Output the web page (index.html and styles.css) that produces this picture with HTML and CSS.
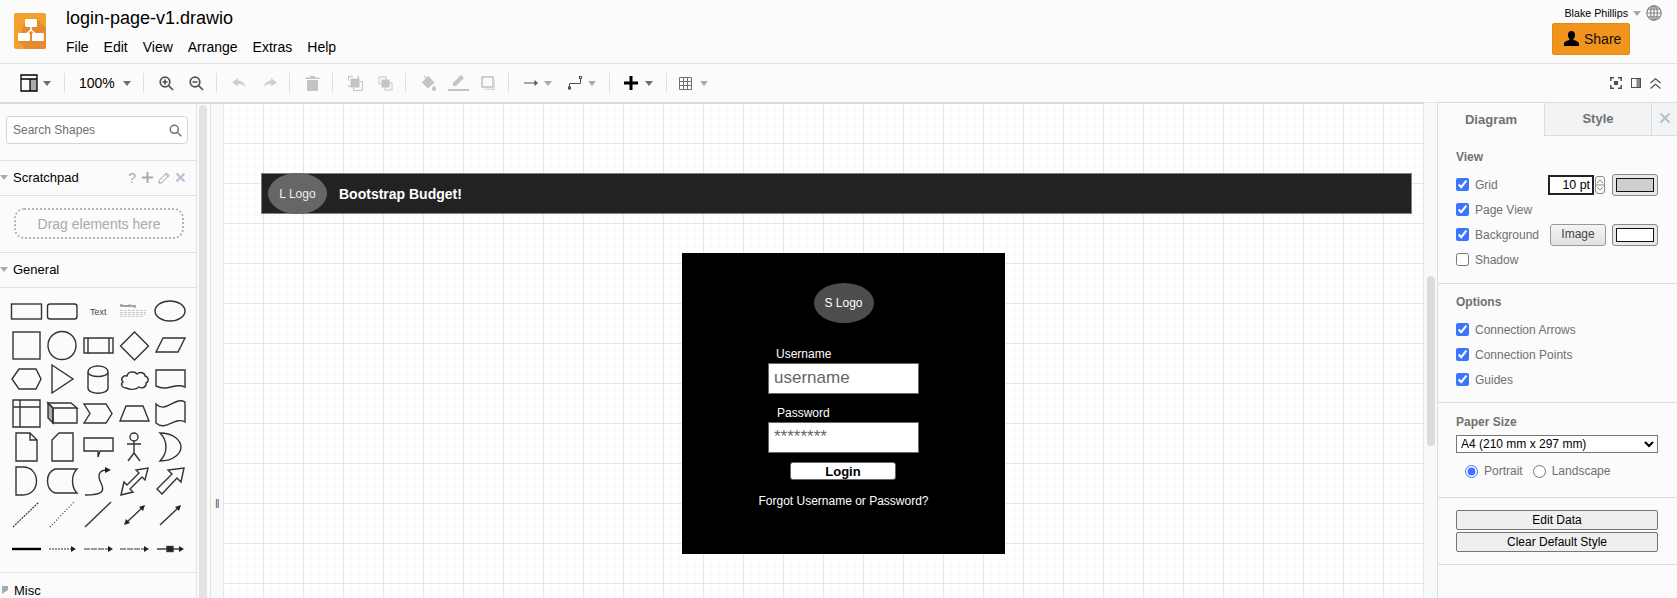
FILE: index.html
```html
<!DOCTYPE html>
<html lang="en">
<head>
  <meta charset="UTF-8">
  <title>login-page-v1.drawio</title>
  <link rel="stylesheet" href="styles.css">
</head>
<body>
  <header class="header">
    <svg class="logo" width="32" height="36" viewBox="0 0 32 36">
      <rect width="32" height="36" rx="2" fill="#f2a12e"/>
      <path d="M12 6h11l9 9v19a2 2 0 0 1-2 2H12L4 28z" fill="#e58a30"/>
      <path d="M17 13v4M17 17l-6 5M17 17l6 5" stroke="#fff" stroke-width="1.6" fill="none"/>
      <rect x="11" y="6" width="12" height="8" rx="1" fill="#fff"/>
      <rect x="4" y="20" width="12" height="8" rx="1" fill="#fff"/>
      <rect x="18" y="20" width="12" height="8" rx="1" fill="#fff"/>
    </svg>
    <div class="title-col">
      <div class="file-name">login-page-v1.drawio</div>
      <nav class="menu"><span>File</span><span>Edit</span><span>View</span><span>Arrange</span><span>Extras</span><span>Help</span></nav>
    </div>
    <div class="user-col">
      <div class="user-row">
        <span>Blake Phillips</span>
        <i class="caret"></i>
        <svg width="16" height="16" viewBox="0 0 16 16" fill="none" stroke="#888" stroke-width="1.2">
          <circle cx="8" cy="8" r="7.2"/><ellipse cx="8" cy="8" rx="3.4" ry="7.2"/>
          <path d="M8 .8v14.4M.8 8h14.4M2 4.2h12M2 11.8h12"/>
        </svg>
      </div>
      <button class="share-btn">
        <svg width="15" height="15" viewBox="0 0 15 15"><path d="M7.5 0c2.2 0 3.5 1.7 3.5 3.9 0 1.6-.6 3-1.5 3.9v1.3c1.9.6 5.5 1.6 5.5 3.4V15H0v-2.500c0-1.800 3.600-2.800 5.500-3.400V7.800C4.600 6.900 4 5.500 4 3.900 4 1.700 5.300 0 7.500 0z"/></svg>
        Share
      </button>
    </div>
  </header>

  <div class="toolbar">
    <div class="tb-group first">
      <svg width="18" height="18" viewBox="0 0 18 18"><rect x="10" y="5" width="7" height="12" fill="#aaa"/><path d="M1 1h16v16H1zM1 5h16M10 5v12" fill="none" stroke="#000" stroke-width="1.300"/></svg>
      <i class="caret"></i>
    </div>
    <div class="tb-group zoom-label"><span>100%</span><i class="caret"></i></div>
    <div class="tb-group icons">
      <svg width="15" height="15" viewBox="0 0 15 15" fill="none" stroke="#505050" stroke-width="1.700"><circle cx="6" cy="6" r="4.800"/><path d="M9.500 9.500L14 14M3.500 6h5M6 3.500v5"/></svg>
      <svg width="15" height="15" viewBox="0 0 15 15" fill="none" stroke="#505050" stroke-width="1.700"><circle cx="6" cy="6" r="4.800"/><path d="M9.500 9.500L14 14M3.500 6h5"/></svg>
    </div>
    <div class="tb-group icons">
      <svg width="15" height="10" viewBox="0 0 15 10" fill="#cfcfcf"><path d="M6 2.500V0L0 4.500 6 8.500V6c3.500 0 6 .8 7.500 3.500C13 6 10.500 2.800 6 2.500z"/></svg>
      <svg width="15" height="10" viewBox="0 0 15 10" fill="#cfcfcf"><path d="M9 2.500V0l6 4.500L9 8.500V6C5.500 6 3 6.800 1.500 9.500 2 6 4.500 2.800 9 2.500z"/></svg>
    </div>
    <div class="tb-group icons">
      <svg width="15" height="15" viewBox="0 0 15 15" fill="#c4c4c4"><path d="M.5 1.500H5V0h5v1.500h4.500V3H.5zM2 4h11v11H2z"/></svg>
    </div>
    <div class="tb-group icons">
      <svg width="15" height="15" viewBox="0 0 15 15" fill="none" stroke="#c4c4c4"><path d="M5 .5H.5V5M.5 9v1.500H3M10.500 3V.5H9" stroke-width="1"/><rect x="3" y="3" width="8" height="8" fill="#c4c4c4"/><path d="M12 5.500h2.500v9h-9V12" stroke-width="1"/></svg>
      <svg width="15" height="15" viewBox="0 0 15 15" fill="none" stroke="#c4c4c4"><rect x="1" y="1" width="7" height="7" fill="#fbfbfb"/><rect x="7" y="7" width="7" height="7" fill="#fbfbfb"/><rect x="4" y="4" width="7" height="7" fill="#c4c4c4"/></svg>
    </div>
    <div class="tb-group icons">
      <svg width="15" height="16" viewBox="0 0 15 16" fill="#c4c4c4"><path d="M3 .5l1.200.8-1 1.700L7.500 1l6 6.500L7 13.500 1 7.500l3.500-4L2.500 2zM13 10.500s2 2.200 2 3.400a2 2 0 0 1-4 0c0-1.200 2-3.400 2-3.400z"/></svg>
      <svg class="wide" width="21" height="16" viewBox="0 0 21 16" fill="#c4c4c4"><path d="M0 14h21v2H0zM5 8L13 0l3 3-8 8H5z"/></svg>
      <svg width="15" height="15" viewBox="0 0 15 15" fill="none"><rect x="1" y="1" width="11" height="10" stroke="#c4c4c4" stroke-width="1.600"/><path d="M3 12.500h9.500V3.500H14v10.500H3z" fill="#dcdcdc"/></svg>
    </div>
    <div class="tb-group icons arrows">
      <svg width="14" height="8" viewBox="0 0 14 8"><path d="M0 3.500h10.500V1L14 4l-3.500 3V4.500H0z" fill="#555"/></svg>
      <i class="caret light"></i>
      <svg class="waypoint" width="14" height="14" viewBox="0 0 14 14" fill="none" stroke="#505050"><rect x=".5" y="11" width="2" height="2"/><rect x="11.500" y=".5" width="2" height="2"/><path d="M1.500 11V7.500h11V2.500"/></svg>
      <i class="caret light"></i>
    </div>
    <div class="tb-group insert">
      <svg width="14" height="14" viewBox="0 0 14 14"><path d="M5.500 0h3v5.500H14v3H8.500V14h-3V8.500H0v-3h5.500z"/></svg>
      <i class="caret"></i>
    </div>
    <div class="tb-group table-btn">
      <svg width="13" height="13" viewBox="0 0 13 13" fill="none" stroke="#707070"><path d="M.5.500h12v12H.5zM4.500.5v12M8.500.5v12M.5 4.500h12M.5 8.500h12"/></svg>
      <i class="caret light"></i>
    </div>
    <div class="tb-right">
      <svg width="12" height="12" viewBox="0 0 12 12" fill="#505050"><path d="M0 0h4v1.500H1.500V4H0zM8 0h4v4h-1.500V1.500H8zM0 8h1.500v2.500H4V12H0zM12 8v4H8v-1.500h2.500V8zM4 4h4v4H4z"/></svg>
      <svg width="10" height="10" viewBox="0 0 10 10"><rect x="5.500" y=".5" width="4" height="9" fill="#888"/><rect x=".5" y=".5" width="9" height="9" fill="none" stroke="#505050"/></svg>
      <svg width="11" height="11" viewBox="0 0 11 11" fill="none" stroke="#505050" stroke-width="1.200"><path d="M.5 5L5.500.8l5 4.200M.5 10.500L5.500 6.300l5 4.200"/></svg>
    </div>
  </div>

  <main class="main">
    <aside class="sidebar">
      <div class="side-col">
        <div class="search-wrap">
          <div class="search-box">
            <span>Search Shapes</span>
            <svg width="13" height="13" viewBox="0 0 13 13" fill="none" stroke="#707070" stroke-width="1.500"><circle cx="5.300" cy="5.300" r="4"/><path d="M8.300 8.300l4 4"/></svg>
          </div>
        </div>
        <div class="side-title">
          <i class="caret"></i><span>Scratchpad</span>
          <div class="pad-icons">
            <span class="q">?</span>
            <svg class="plus" width="11" height="11" viewBox="0 0 11 11"><path d="M4.500 0h2v4.500H11v2H6.500V11h-2V6.500H0v-2h4.500z" fill="#aaa"/></svg>
            <svg width="12" height="12" viewBox="0 0 12 12" fill="none" stroke="#999"><path d="M1 8.500L8.500 1l2.500 2.500L3.500 11H1zM7.500 2l2.500 2.500"/></svg>
            <svg width="9" height="9" viewBox="0 0 9 9" stroke="#b4c4d4" stroke-width="2.200"><path d="M.5.500l8 8M8.500.5l-8 8"/></svg>
          </div>
        </div>
        <div class="drag-wrap"><div class="drag-box">Drag elements here</div></div>
        <div class="side-title"><i class="caret"></i><span>General</span></div>
        <svg class="shapes" width="197" height="284" viewBox="0 288 197 284">
          <rect x="11.500" y="304" width="30" height="15"/>
          <rect x="47.500" y="304" width="29.500" height="15" rx="2.500"/>
          <text x="90" y="315" class="sh-text">Text</text>
          <text x="120" y="307" class="sh-head">Heading</text>
          <path class="thin" d="M120 310.500h26M120 312.500h26M120 314.500h26M120 316.500h24"/>
          <ellipse cx="170" cy="311" rx="15" ry="10"/>

          <rect x="13" y="332" width="27" height="27"/>
          <circle cx="62" cy="345.500" r="14"/>
          <path d="M84 338h29v15H84zM88 338v15M109 338v15"/>
          <path d="M134.500 332l14 14-14 14-14-14z"/>
          <path d="M156 352l7-14h22l-7 14z"/>

          <path d="M12 379l7-10h17l5 10-5 10H19z"/>
          <path d="M52 365l21 14-21 14z"/>
          <path d="M88 372c0-8 20-8 20 0v16c0 7-20 7-20 0zM88 372c0 6 20 6 20 0"/>
          <path d="M126 388c-4 0-6-4-3-6-3-3 0-7 4-6 1-5 8-5 10-2 3-3 8-1 8 2 4 1 4 6 1 7 1 4-4 6-7 4-3 3-9 3-13 1z"/>
          <path d="M156 370h29v17c-10-5-17 5-29-1z"/>

          <path d="M13 400h27v27H13zM13 407h27M20 400v27"/>
          <path class="shade" d="M48 403l5 5v15l-5-5z"/>
          <path d="M48 403h23l6 5H53zM53 408h24v15H53z"/>
          <path d="M84 404h22l6 9.500-6 9.500H84l6-9.500z"/>
          <path d="M120 421l6-15h17l6 15z"/>
          <path d="M156 404c10 10 19-8 29-2v20c-10-6-19 10-29 1z"/>

          <path d="M16 433h14l7 7v21H16z M30 433v7h7"/>
          <path d="M59 433h14v28H52v-21z"/>
          <path d="M84 438h29v13h-13l-2 6v-6H84z"/>
          <circle cx="134" cy="437" r="4"/>
          <path d="M134 441v12M127 444h14M134 453l-6 8M134 453l6 8"/>
          <path d="M160 433c14 0 21 8 21 14s-7 14-21 14c8-8 8-20 0-28z"/>

          <path d="M16 467h7c18 0 18 28 0 28h-7z"/>
          <path d="M55 469h22c-6 6-6 18 0 24H55c-10-4-10-20 0-24z"/>
          <path d="M85 495c18 0 20-4 16-12s-2-13 6-13"/>
          <path class="solid" d="M105 467l6 3-6 3z"/>
          <path d="M121 495l3-13 3 3 12-12-3-3 12-2-3 12-3-3-12 12 3 3z"/>
          <path d="M184 468l-3 14-4-4-15 16-5-5 15-15-4-4z"/>

          <path class="dash" d="M13 527l26-25"/>
          <path class="dots" d="M50 527l24-25"/>
          <path d="M85 527l26-25"/>
          <path d="M126 523l17-16"/>
          <path class="solid" d="M124 525l2-6 4 4zM145 505l-2 6-4-4z"/>
          <path d="M160 525l19-18"/>
          <path class="solid" d="M181 505l-2 6-4-4z"/>

          <path class="thick" d="M12 549h29"/>
          <path class="dash" d="M49 549h22"/>
          <path class="solid" d="M76 549l-5-3v6z"/>
          <path class="blur" d="M84 549h24"/>
          <path class="solid" d="M113 549l-5-3v6z"/>
          <path class="blur" d="M120 549h24"/>
          <path class="solid" d="M149 549l-5-3v6z"/>
          <path d="M157 549h22"/>
          <rect class="box" x="167" y="546.500" width="6" height="5"/>
          <path class="solid" d="M184 549l-5-3v6z"/>
        </svg>
        <div class="side-title misc"><i class="caret side"></i><span>Misc</span></div>
      </div>
      <div class="side-scroll"><div class="side-thumb"></div></div>
    </aside>

    <div class="splitter"><span>||</span></div>

    <section class="canvas">
      <div class="nav-bar">
        <div class="nav-logo">L Logo</div>
        <div class="nav-title">Bootstrap Budget!</div>
      </div>
      <div class="login-box">
        <div class="login-logo">S Logo</div>
        <div class="login-label user">Username</div>
        <div class="login-input">username</div>
        <div class="login-label pass">Password</div>
        <div class="login-input">********</div>
        <div class="login-btn">Login</div>
        <div class="login-forgot">Forgot Username or Password?</div>
      </div>
    </section>

    <div class="strip"><div class="strip-thumb"></div></div>

    <aside class="panel">
      <div class="tabs">
        <div class="tab active">Diagram</div>
        <div class="tab">Style</div>
        <div class="tab-close">
          <svg width="10" height="10" viewBox="0 0 10 10" stroke="#b4c4d4" stroke-width="2.200"><path d="M.5.500l9 9M9.500.5l-9 9"/></svg>
        </div>
      </div>

      <div class="sect view">
        <h4>View</h4>
        <div class="check-row">
          <label><input type="checkbox" checked> Grid</label>
          <div class="row-end">
            <input class="pt-input" type="text" value="10 pt">
            <div class="spinner">
              <svg width="10" height="18" viewBox="0 0 10 18" fill="none" stroke="#8a8a8a"><path d="M.5 3a2.500 2.500 0 0 1 2.500-2.500h4A2.500 2.500 0 0 1 9.500 3v12A2.500 2.500 0 0 1 7 17.500H3A2.500 2.500 0 0 1 .5 15zM.5 9h9M2 7l3-3 3 3M2 11l3 3 3-3"/></svg>
            </div>
            <div class="color-btn"><span class="swatch grey"></span></div>
          </div>
        </div>
        <div class="check-row"><label><input type="checkbox" checked> Page View</label></div>
        <div class="check-row">
          <label><input type="checkbox" checked> Background</label>
          <div class="row-end">
            <button class="image-btn">Image</button>
            <div class="color-btn"><span class="swatch"></span></div>
          </div>
        </div>
        <div class="check-row"><label><input type="checkbox"> Shadow</label></div>
      </div>

      <div class="sect options">
        <h4>Options</h4>
        <div class="check-row"><label><input type="checkbox" checked> Connection Arrows</label></div>
        <div class="check-row"><label><input type="checkbox" checked> Connection Points</label></div>
        <div class="check-row"><label><input type="checkbox" checked> Guides</label></div>
      </div>

      <div class="sect paper">
        <h4>Paper Size</h4>
        <select class="paper-select"><option>A4 (210 mm x 297 mm)</option></select>
        <div class="radio-row">
          <label><input type="radio" name="orient" checked> Portrait</label>
          <label><input type="radio" name="orient"> Landscape</label>
        </div>
      </div>

      <div class="sect actions">
        <button class="wide-btn">Edit Data</button>
        <button class="wide-btn">Clear Default Style</button>
      </div>
    </aside>
  </main>
</body>
</html>
```
FILE: styles.css
```css
* { box-sizing: border-box; }
html, body { margin: 0; height: 598px; overflow: hidden; }
body { font-family: "Liberation Sans", Arial, sans-serif; background: #fbfbfb; color: #000; }
svg { display: block; flex: none; }

.caret { display: block; flex: none; width: 0; height: 0; border-left: 4px solid transparent; border-right: 4px solid transparent; border-top: 5px solid #707070; }
.caret.light { border-top-color: #aaa; }
.caret.side { border-top: 4px solid transparent; border-bottom: 4px solid transparent; border-left: 6px solid #aaa; border-right: 0; }

/* top bar */
.header { display: flex; height: 64px; border-bottom: 1px solid #e0e0e0; }
.logo { margin: 13px 0 0 14px; }
.title-col { margin-left: 20px; padding-top: 7px; }
.file-name { font-size: 18px; line-height: 22px; }
.menu { display: flex; gap: 15px; margin-top: 9px; font-size: 14px; line-height: 18px; }
.user-col { margin-left: auto; padding: 5px 15px 0 0; display: flex; flex-direction: column; align-items: flex-end; }
.user-row { display: flex; align-items: center; gap: 5px; font-size: 10.700px; height: 16px; }
.user-row .caret { border-top-color: #aaa; }
.share-btn { display: flex; align-items: center; gap: 5px; width: 78px; height: 32px; margin: 2px 32px 0 0; padding: 0 0 1px 11px; background: #f2931e; border: 1px solid #e08a1a; border-radius: 2px; font: 14px "Liberation Sans", Arial, sans-serif; color: #111; }

/* toolbar */
.toolbar { display: flex; align-items: center; height: 38px; font-size: 14px; }
.tb-group { display: flex; align-items: center; height: 20px; padding: 0 13px 0 15px; border-right: 1px solid #e0e0e0; }
.tb-group.first { gap: 5px; width: 65px; padding-left: 20px; }
.tb-group.zoom-label { gap: 8px; width: 79px; padding-left: 14px; }
.tb-group.icons { gap: 15px; padding-right: 12px; }
.tb-group.icons .wide { margin: 0 -3px 1px -3px; }
.tb-group.arrows { gap: 6px; padding-right: 13px; }
.tb-group.arrows .waypoint { margin-left: 10px; }
.tb-group.insert { gap: 7px; padding-left: 14px; }
.tb-group.table-btn { gap: 8px; padding-left: 12px; border-right: 0; }
.tb-right { display: flex; align-items: center; gap: 9px; margin-left: auto; padding-right: 16px; }

/* main area */
.main { display: flex; height: 496px; }
.sidebar { display: flex; flex: none; width: 211px; border-top: 2px solid #dadce0; border-right: 1px solid #e0e0e0; }
.side-col { width: 197px; flex: none; border-right: 1px solid #e4e4e4; }
.side-scroll { flex: 1; padding: 1px 3px 0 2px; }
.side-thumb { height: 100%; background: #e2e2e2; border-radius: 4px 4px 0 0; }
.search-wrap { height: 57px; padding: 12px 0 0 6px; border-bottom: 1px solid #e0e0e0; }
.search-box { display: flex; align-items: center; justify-content: space-between; width: 182px; height: 28px; padding: 0 5px 0 6px; background: #fff; border: 1px solid #d5d5d5; border-radius: 4px; font-size: 12px; color: #707070; }
.side-title { display: flex; align-items: center; height: 35px; padding-bottom: 1px; border-bottom: 1px solid #e0e0e0; font-size: 13px; }
.side-title .caret { margin-right: 5px; border-top-color: #aaa; }
.side-title .caret.side { margin: 0 6px 0 2px; }
.side-title.misc { border-bottom: 0; }
.pad-icons { display: flex; align-items: center; gap: 6px; margin-left: auto; padding-right: 11px; }
.pad-icons .q { font-size: 14px; color: #aaa; }
.pad-icons .plus { margin-right: -1px; }
.drag-wrap { height: 57px; padding: 12px 0 0 14px; border-bottom: 1px solid #e0e0e0; }
.drag-box { display: flex; align-items: center; justify-content: center; width: 170px; height: 31px; border: 2px dotted #b4b4b4; border-radius: 10px; font-size: 14px; color: #aaa; }
.shapes { border-bottom: 1px solid #e4e4e4; height: 285px; }
.shapes * { fill: none; stroke: #333; stroke-width: 1.400; }
.shapes .shade { fill: #aaa; }
.shapes .thin { stroke: #aaa; stroke-width: .6; stroke-dasharray: 3 1; }
.shapes .solid { fill: #222; stroke: none; }
.shapes .dash { stroke-width: 1.200; stroke-dasharray: 2 1; }
.shapes .dots { stroke-width: 1.200; stroke-dasharray: 1 2; }
.shapes .blur { stroke: #777; stroke-dasharray: 6 1; }
.shapes .thick { stroke: #000; stroke-width: 2.400; }
.shapes .box { fill: #222; }
.shapes .sh-text { fill: #444; stroke: none; font-size: 9px; }
.shapes .sh-head { fill: #555; stroke: none; font-size: 4px; font-weight: bold; }

.splitter { display: flex; align-items: flex-start; justify-content: center; flex: none; width: 12px; border-top: 2px solid #dadce0; background: #f8f9fa; }
.splitter span { margin-top: 394px; font-size: 9px; color: #333; letter-spacing: -.5px; }

/* diagram */
.canvas { position: relative; flex: none; width: 1201px; border-top: 2px solid #dadce0; background-color: #fff; overflow: hidden;
  background-image:
    linear-gradient(#e6e6e6 1px, transparent 1px),
    linear-gradient(90deg, #e6e6e6 1px, transparent 1px),
    linear-gradient(#f9f9f9 1px, transparent 1px),
    linear-gradient(90deg, #f9f9f9 1px, transparent 1px);
  background-size: 40px 40px, 40px 40px, 8px 8px, 8px 8px;
  background-position: 0 -1px, 0 0, 0 -1px, 0 0;
}
.nav-bar { position: absolute; left: 38px; top: 69px; display: flex; align-items: center; width: 1151px; height: 41px; background: #222; border: 1px solid #808080; }
.nav-logo { display: flex; align-items: center; justify-content: center; flex: none; width: 59px; height: 41px; margin-left: 6px; border-radius: 50%; background: #666; font-size: 12px; color: #f0f0f0; }
.nav-title { margin-left: 12px; font-size: 14px; font-weight: bold; color: #fff; }
.login-box { position: absolute; left: 459px; top: 149px; display: flex; flex-direction: column; align-items: center; width: 323px; height: 301px; padding-top: 30px; background: #000; color: #fff; font-size: 12px; }
.login-logo { display: flex; align-items: center; justify-content: center; width: 60px; height: 40px; border-radius: 50%; background: #4d4d4d; }
.login-label { width: 151px; line-height: 14px; }
.login-label.user { margin-top: 24px; padding-left: 8px; }
.login-label.pass { margin-top: 12px; padding-left: 9px; }
.login-input { width: 151px; height: 31px; margin-top: 2px; padding: 4px 5px; background: #fff; border: 1px solid #666; font-size: 17px; line-height: 19px; color: #666; }
.login-btn { display: flex; align-items: center; justify-content: center; width: 106px; height: 18px; margin-top: 9px; margin-right: 1px; background: #fff; border: 1px solid #666; border-radius: 3px; font-size: 13px; font-weight: bold; color: #000; }
.login-forgot { margin-top: 14px; line-height: 14px; }

.strip { flex: none; width: 13px; border-top: 1px solid #e4e6ea; background: #f8f9fa; padding: 173px 2px 0 3px; }
.strip-thumb { height: 170px; background: #dcdcdc; border-radius: 4px; }

/* format panel */
.panel { flex: 1; border-left: 1px solid #dadce0; border-top: 1px solid #dadce0; font-size: 12px; color: #707070; }
.tabs { display: flex; height: 33px; font-size: 13px; font-weight: bold; }
.tab { display: flex; align-items: center; justify-content: center; width: 107px; padding-bottom: 2px; background: #f1f3f4; border-right: 1px solid #dadce0; border-bottom: 1px solid #dadce0; }
.tab.active { background: #fbfbfb; border-bottom: 0; padding-bottom: 0; }
.tab-close { display: flex; align-items: center; justify-content: center; flex: 1; padding-bottom: 3px; background: #f1f3f4; border-bottom: 1px solid #dadce0; }
.sect { padding-left: 18px; border-bottom: 1px solid #dadce0; }
.sect h4 { margin: 0; font-size: 12px; line-height: 14px; font-weight: bold; }
.sect.view { padding-top: 14px; padding-bottom: 11px; }
.sect.view h4 { margin-bottom: 8px; }
.sect.options { padding-top: 11px; padding-bottom: 10px; }
.sect.options h4 { margin-bottom: 8px; }
.sect.paper { height: 95px; padding-top: 12px; }
.sect.paper h4 { margin-bottom: 6px; }
.sect.actions { display: flex; flex-direction: column; gap: 2px; height: 67px; padding-top: 12px; }

.check-row { display: flex; align-items: center; height: 25px; padding-right: 19px; }
.check-row label { display: flex; align-items: center; gap: 6px; }
.check-row input[type=checkbox] { width: 13px; height: 13px; margin: 0; accent-color: #3a74ff; }
.row-end { display: flex; align-items: center; margin-left: auto; }
.pt-input { width: 46px; height: 20px; padding: 0 2px 0 0; text-align: right; border: 2px solid #222; font: 12.400px "Liberation Sans", Arial, sans-serif; color: #000; background: #fff; outline: 0; }
.spinner { margin: 0 7px 0 1px; }
.color-btn { display: flex; align-items: center; justify-content: center; width: 46px; height: 22px; background: #e8e8e8; border: 1px solid #8a8a8a; border-radius: 3px; }
.swatch { display: block; width: 38px; height: 14px; background: #fff; border: 1px solid #111; }
.swatch.grey { background: #cfcfcf; }
.image-btn { width: 56px; height: 22px; margin-right: 6px; padding: 0 0 2px; background: linear-gradient(#f4f4f4, #e2e2e2); border: 1px solid #999; border-radius: 3px; font: 12px "Liberation Sans", Arial, sans-serif; color: #444; }
.paper-select { display: block; width: 202px; height: 18px; padding: 0; background: #fff; border: 1px solid #767676; border-radius: 0; font: 12px "Liberation Sans", Arial, sans-serif; color: #000; }
.radio-row { display: flex; gap: 10px; align-items: center; height: 20px; margin-top: 8px; padding-left: 9px; }
.radio-row label { display: flex; align-items: center; gap: 6px; }
.radio-row input { width: 13px; height: 13px; margin: 0; accent-color: #3a74ff; }
.wide-btn { width: 202px; height: 20px; padding: 0; background: #efefef; border: 1px solid #767676; border-radius: 2px; font: 12px "Liberation Sans", Arial, sans-serif; color: #000; }
```
